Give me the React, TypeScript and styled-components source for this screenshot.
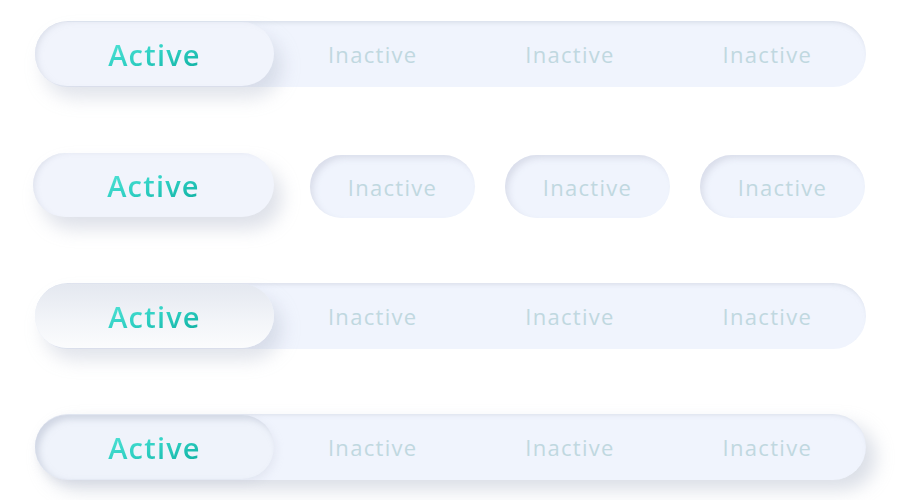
import React from "react";
import styled, { createGlobalStyle, css } from "styled-components";

const Global = createGlobalStyle`
  html, body { margin: 0; padding: 0; background: #ffffff; }
  body { font-family: "Open Sans", "Noto Sans", sans-serif; }
`;

const Page = styled.div`
  width: 901px;
  height: 500px;
  box-sizing: border-box;
  padding: 21px 35px 0 35px;
  display: flex;
  flex-direction: column;
  gap: 65px;
  background: #ffffff;
`;

type Variant = "inset" | "plain" | "raised";

const Track = styled.div<{ $variant: Variant }>`
  width: 831px;
  height: 66px;
  border-radius: 33px;
  display: flex;
  align-items: center;
  background: #f0f4fd;
  ${(p) =>
    p.$variant === "inset" &&
    css`
      box-shadow: inset 0 4px 5px -3px rgba(190, 196, 212, 0.6);
    `}
  ${(p) =>
    p.$variant === "plain" &&
    css`
      box-shadow: inset 0 4px 5px -3px rgba(190, 196, 212, 0.55);
    `}
  ${(p) =>
    p.$variant === "raised" &&
    css`
      box-shadow: 10px 10px 18px rgba(170, 178, 198, 0.42),
        inset 0 3px 4px -2px rgba(200, 205, 220, 0.5);
    `}
`;

const Separate = styled.div`
  width: 831px;
  height: 66px;
  display: flex;
  align-items: center;
  gap: 30px;
`;

type ActiveKind = "soft" | "gradient" | "pressed" | "lifted";

const ActivePill = styled.div<{ $kind: ActiveKind }>`
  flex: 0 0 239px;
  height: 64px;
  border-radius: 32px;
  display: flex;
  align-items: center;
  justify-content: center;
  box-sizing: border-box;
  background: #f1f4fc;
  ${(p) =>
    p.$kind === "soft" &&
    css`
      box-shadow: 8px 12px 18px rgba(172, 180, 200, 0.36),
        inset 5px 2px 6px -4px rgba(190, 196, 212, 0.5);
    `}
  ${(p) =>
    p.$kind === "lifted" &&
    css`
      flex-basis: 241px;
      margin-left: -2px;
      margin-right: 6px;
      box-shadow: 8px 12px 18px rgba(172, 180, 200, 0.4),
        inset 5px 2px 6px -4px rgba(190, 196, 212, 0.45);
    `}
  ${(p) =>
    p.$kind === "gradient" &&
    css`
      background: linear-gradient(180deg, #e4e8f0 0%, #f3f5f9 60%, #fbfcfd 100%);
      box-shadow: 8px 12px 18px rgba(172, 180, 200, 0.36);
    `}
  ${(p) =>
    p.$kind === "pressed" &&
    css`
      background: #eff3fb;
      box-shadow: inset 4px 4px 6px rgba(180, 187, 205, 0.5),
        2px 4px 8px rgba(180, 187, 205, 0.22);
    `}
`;

const Tab = styled.div`
  flex: 1 1 0;
  height: 64px;
  display: flex;
  align-items: center;
  justify-content: center;
`;

const SmallPill = styled.div`
  flex: 0 0 165px;
  height: 63px;
  margin-top: 3px;
  border-radius: 32px;
  display: flex;
  align-items: center;
  justify-content: center;
  background: #f0f4fd;
  box-shadow: inset 4px 4px 6px -1px rgba(188, 194, 210, 0.45);
`;

const ActiveLabel = styled.span`
  font-family: "Open Sans", "Noto Sans", sans-serif;
  font-size: 29px;
  font-weight: 600;
  letter-spacing: 1.2px;
  background: linear-gradient(160deg, #52e3d6 0%, #2fd0c3 50%, #0fb0a2 100%);
  -webkit-background-clip: text;
  background-clip: text;
  color: transparent;
  line-height: 1;
`;

const InactiveLabel = styled.span`
  font-family: "Open Sans", "Noto Sans", sans-serif;
  font-size: 22px;
  font-weight: 500;
  letter-spacing: 1.3px;
  color: #c0d8e0;
  line-height: 1;
`;

const tabs = ["Inactive", "Inactive", "Inactive"];

export default function App() {
  return (
    <>
      <Global />
      <Page>
        <Track $variant="inset">
          <ActivePill $kind="soft">
            <ActiveLabel>Active</ActiveLabel>
          </ActivePill>
          {tabs.map((t, i) => (
            <Tab key={i}>
              <InactiveLabel>{t}</InactiveLabel>
            </Tab>
          ))}
        </Track>

        <Separate>
          <ActivePill $kind="lifted">
            <ActiveLabel>Active</ActiveLabel>
          </ActivePill>
          {tabs.map((t, i) => (
            <SmallPill key={i}>
              <InactiveLabel>{t}</InactiveLabel>
            </SmallPill>
          ))}
        </Separate>

        <Track $variant="plain">
          <ActivePill $kind="gradient">
            <ActiveLabel>Active</ActiveLabel>
          </ActivePill>
          {tabs.map((t, i) => (
            <Tab key={i}>
              <InactiveLabel>{t}</InactiveLabel>
            </Tab>
          ))}
        </Track>

        <Track $variant="raised">
          <ActivePill $kind="pressed">
            <ActiveLabel>Active</ActiveLabel>
          </ActivePill>
          {tabs.map((t, i) => (
            <Tab key={i}>
              <InactiveLabel>{t}</InactiveLabel>
            </Tab>
          ))}
        </Track>
      </Page>
    </>
  );
}
